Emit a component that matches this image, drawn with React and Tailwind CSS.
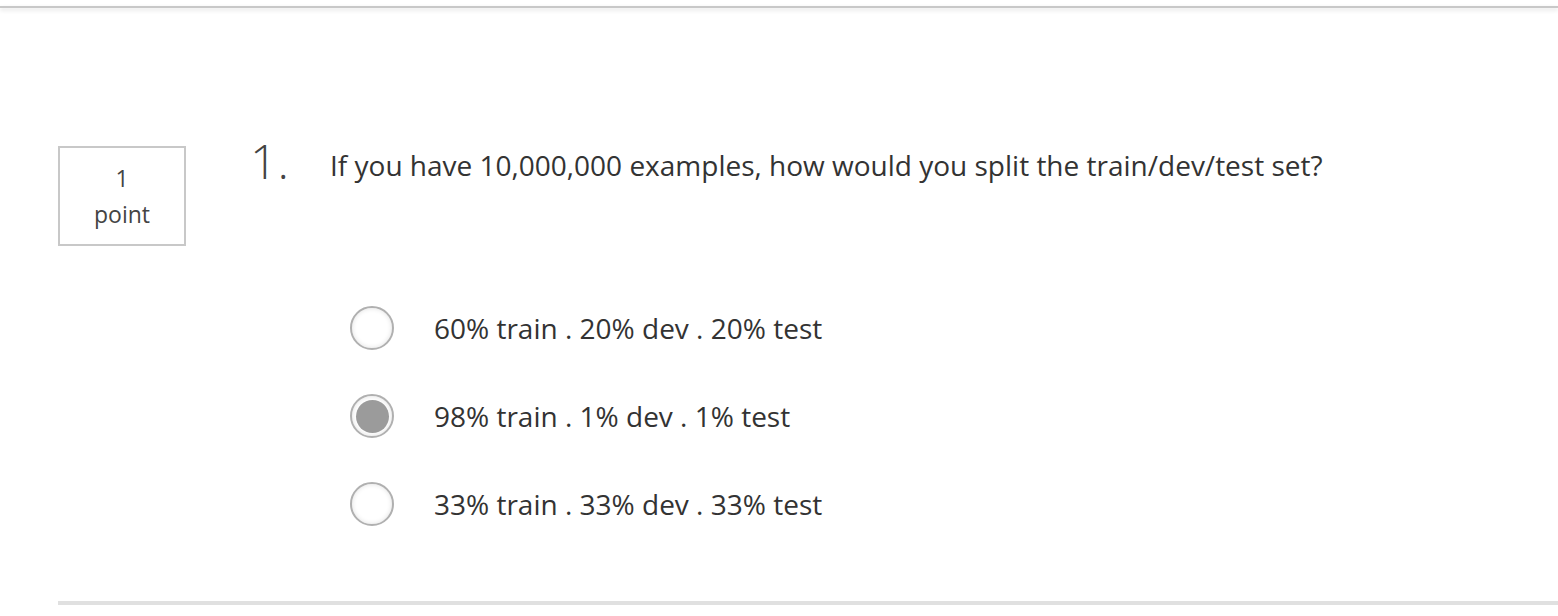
import React from 'react';

const options = [
  { label: '60% train . 20% dev . 20% test', checked: false },
  { label: '98% train . 1% dev . 1% test', checked: true },
  { label: '33% train . 33% dev . 33% test', checked: false },
];

const Radio = ({ checked }) => (
  <span className="flex h-[44px] w-[44px] shrink-0 items-center justify-center rounded-full border-2 border-[#b0b0b0] bg-white shadow-[inset_0_0_5px_rgba(0,0,0,0.12)]">
    {checked && <span className="h-[33px] w-[33px] rounded-full bg-[#9b9b9b]" />}
  </span>
);

const App = () => {
  return (
    <div className="h-[616px] w-full overflow-hidden bg-white text-[#333]" style={{ fontFamily: '"Open Sans", "Noto Sans", sans-serif' }}>
      <div className="h-[6px]" />
      <div className="h-[2px] bg-[#c8c8c8] shadow-[0_2px_4px_rgba(0,0,0,0.15)]" />

      <div className="pl-[58px]">
        <div className="flex pt-[138px]">
          <div className="flex h-[100px] w-[128px] shrink-0 flex-col items-center justify-center border-2 border-[#c8c8c8] text-[23px] leading-[36px] text-[#444]">
            <span>1</span>
            <span>point</span>
          </div>

          <div className="ml-[64px] flex-1">
            <div className="flex items-start">
              <span className="w-[80px] shrink-0 text-[48px] font-light leading-[36px] text-[#444] -mt-[3px]">1.</span>
              <p className="text-[28px] leading-[40px] text-[#333] -mt-[1px]">
                If you have 10,000,000 examples, how would you split the train/dev/test set?
              </p>
            </div>

            <div className="ml-[100px] mt-[121px] flex flex-col gap-[44px]">
              {options.map((opt) => (
                <label key={opt.label} className="flex items-center gap-[40px]">
                  <Radio checked={opt.checked} />
                  <span className="text-[28px] leading-[44px]">{opt.label}</span>
                </label>
              ))}
            </div>
          </div>
        </div>

        <div className="mt-[75px] h-[4px] bg-[#e0e0e0]" />
      </div>
    </div>
  );
};

export default App;
